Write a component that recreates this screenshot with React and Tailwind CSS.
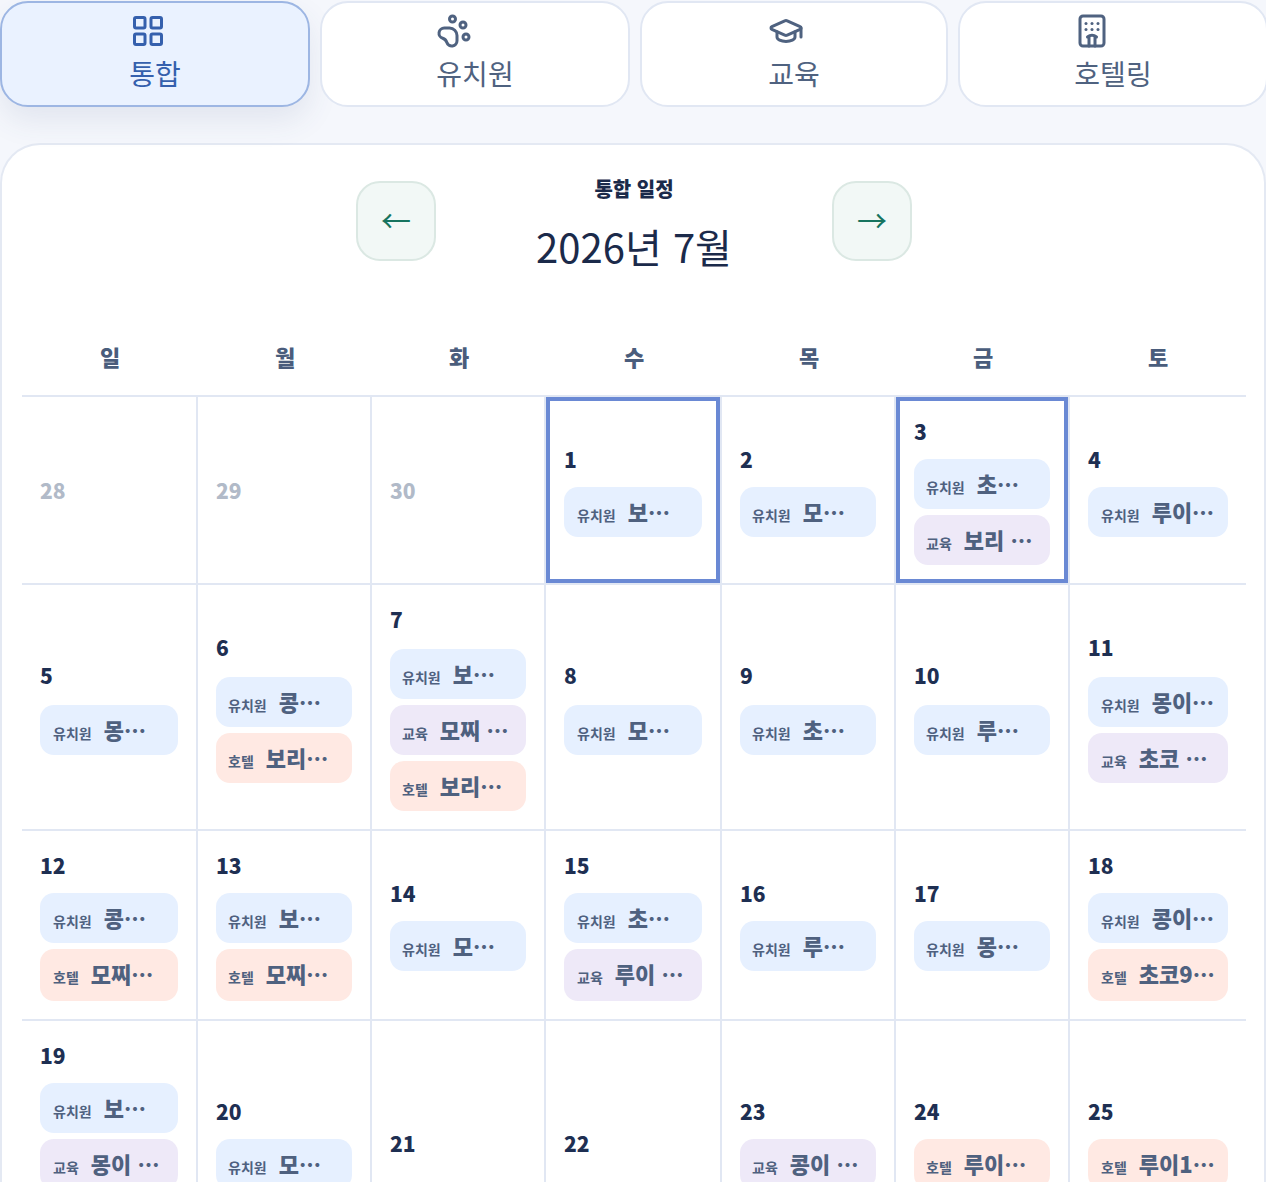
import React from "react";
import { LayoutGrid, PawPrint, GraduationCap, Hotel } from "lucide-react";

const tabs = [
  { label: "통합", Icon: LayoutGrid, active: true },
  { label: "유치원", Icon: PawPrint },
  { label: "교육", Icon: GraduationCap },
  { label: "호텔링", Icon: Hotel },
];

const weekdays = ["일", "월", "화", "수", "목", "금", "토"];

const K = "유치원";
const E = "교육";
const H = "호텔";

const rows = [
  {
    height: "h-[188px]",
    numberGap: "mb-[10px]",
    cells: [
      { day: 28, faded: true, chips: [] },
      { day: 29, faded: true, chips: [] },
      { day: 30, faded: true, chips: [] },
      { day: 1, selected: true, chips: [[K, "보…"]] },
      { day: 2, chips: [[K, "모…"]] },
      { day: 3, selected: true, chips: [[K, "초…"], [E, "보리 …"]] },
      { day: 4, chips: [[K, "루이…"]] },
    ],
  },
  {
    height: "h-[246px]",
    numberGap: "mb-[12px]",
    cells: [
      { day: 5, chips: [[K, "몽…"]] },
      { day: 6, chips: [[K, "콩…"], [H, "보리…"]] },
      { day: 7, chips: [[K, "보…"], [E, "모찌 …"], [H, "보리…"]] },
      { day: 8, chips: [[K, "모…"]] },
      { day: 9, chips: [[K, "초…"]] },
      { day: 10, chips: [[K, "루…"]] },
      { day: 11, chips: [[K, "몽이…"], [E, "초코 …"]] },
    ],
  },
  {
    height: "h-[190px]",
    numberGap: "mb-[10px]",
    tallSecond: true,
    liftSingle: true,
    cells: [
      { day: 12, chips: [[K, "콩…"], [H, "모찌…"]] },
      { day: 13, chips: [[K, "보…"], [H, "모찌…"]] },
      { day: 14, chips: [[K, "모…"]] },
      { day: 15, chips: [[K, "초…"], [E, "루이 …"]] },
      { day: 16, chips: [[K, "루…"]] },
      { day: 17, chips: [[K, "몽…"]] },
      { day: 18, chips: [[K, "콩이…"], [H, "초코9…"]] },
    ],
  },
  {
    height: "h-[244px]",
    numberGap: "mb-[10px]",
    cells: [
      { day: 19, chips: [[K, "보…"], [E, "몽이 …"], [H, "보리…"]] },
      { day: 20, chips: [[K, "모…"]] },
      { day: 21, chips: [] },
      { day: 22, chips: [] },
      { day: 23, chips: [[E, "콩이 …"]] },
      { day: 24, chips: [[H, "루이…"]] },
      { day: 25, chips: [[H, "루이1…"]] },
    ],
  },
];

const chipColor = {
  [K]: "bg-[#e6f0ff]",
  [E]: "bg-[#eee9f8]",
  [H]: "bg-[#ffe9e3]",
};

function Chip({ type, name, tall, wide }) {
  return (
    <div
      className={`flex items-baseline gap-3 rounded-[14px] pt-[8px] text-[#4f617f] ${wide ? "pl-[13px]" : "pl-3"} ${chipColor[type]} ${tall ? "h-[52px]" : "h-[50px]"}`}
    >
      <span className="text-[14px] font-bold leading-[32px]">{type}</span>
      <span className="text-[22px] font-extrabold leading-[32px] whitespace-nowrap">{name}</span>
    </div>
  );
}

function Cell({ cell, numberGap, tallSecond, liftSingle, last, wide }) {
  const hasChips = cell.chips.length > 0;
  return (
    <div
      className={`flex flex-col justify-center border-b-2 border-[#e1e7f3] px-[18px] ${last ? "" : "border-r-2"} ${liftSingle && cell.chips.length === 1 ? "pb-[2px]" : ""} ${cell.selected ? "shadow-[inset_0_0_0_4px_#6a89d4]" : ""}`}
    >
      <div
        className={`h-[34px] text-[21px] font-extrabold leading-[32px] ${cell.faded ? "mt-px text-[#b1bac8]" : "text-[#1e2f52]"} ${hasChips ? numberGap : ""} ${!hasChips && !cell.faded ? "mt-[4px]" : ""}`}
      >
        {cell.day}
      </div>
      {hasChips && (
        <div className="flex flex-col gap-[6px]">
          {cell.chips.map(([type, name], i) => (
            <Chip key={i} type={type} name={name} wide={wide} tall={tallSecond && i === 1} />
          ))}
        </div>
      )}
    </div>
  );
}

export default function App() {
  return (
    <div
      lang="ko"
      className="h-[1182px] overflow-hidden bg-[#f5f7fc] pt-px font-['Noto_Sans_CJK_KR','Noto_Sans',sans-serif]"
    >
      <div className="grid grid-cols-[310px_310px_308px_310px] gap-[10px]">
        {tabs.map(({ label, Icon, active }) => (
          <button
            key={label}
            className={`flex h-[106px] flex-col items-center rounded-[28px] border-2 pt-[10px] ${
              active
                ? "border-[#9db6e3] bg-[#eaf2ff] text-[#3560ad] shadow-[0_14px_30px_rgba(60,80,130,0.10)]"
                : "border-[#e1e7f3] bg-white text-[#4f6280]"
            }`}
          >
            <span className="flex flex-col items-start">
              <Icon size={36} strokeWidth={2} className={active ? "ml-px" : ""} />
              <span className="mt-[4px] text-[28px] font-normal leading-[40px]">{label}</span>
            </span>
          </button>
        ))}
      </div>

      <div className="mt-[36px] rounded-t-[40px] border-2 border-b-0 border-[#e4e9f3] bg-white pl-5 pr-[18px] pt-[36px]">
        <div className="flex items-start justify-center">
          <button className="flex h-20 w-20 items-center justify-center rounded-3xl border-2 border-[#dbe8e3] bg-[#f2f8f6] pb-[4px] text-[30px] leading-none text-[#17745f]">
            ←
          </button>
          <div className="flex w-[396px] flex-col items-center text-[#1b2a4a]">
            <div className="text-[20px] font-extrabold leading-[16px]">통합 일정</div>
            <div className="mt-[20px] text-[40px] font-normal leading-[58px]">2026년 7월</div>
          </div>
          <button className="flex h-20 w-20 items-center justify-center rounded-3xl border-2 border-[#dbe8e3] bg-[#f2f8f6] pb-[4px] text-[30px] leading-none text-[#17745f]">
            →
          </button>
        </div>

        <div className="mt-[65px] grid grid-cols-[176px_174px_174px_176px_174px_174px_176px] border-b-2 border-[#e1e7f3] pb-[23px]">
          {weekdays.map((d) => (
            <div key={d} className="text-center text-[22px] font-extrabold leading-[32px] text-[#4a5d7c]">
              {d}
            </div>
          ))}
        </div>

        {rows.map((row, r) => (
          <div
            key={r}
            className={`grid grid-cols-[176px_174px_174px_176px_174px_174px_176px] ${row.height}`}
          >
            {row.cells.map((cell, c) => (
              <Cell
                key={cell.day}
                cell={cell}
                numberGap={row.numberGap}
                tallSecond={row.tallSecond}
                liftSingle={row.liftSingle}
                wide={c === 0 || c === 3 || c === 6}
                last={c === 6}
              />
            ))}
          </div>
        ))}
      </div>
    </div>
  );
}
